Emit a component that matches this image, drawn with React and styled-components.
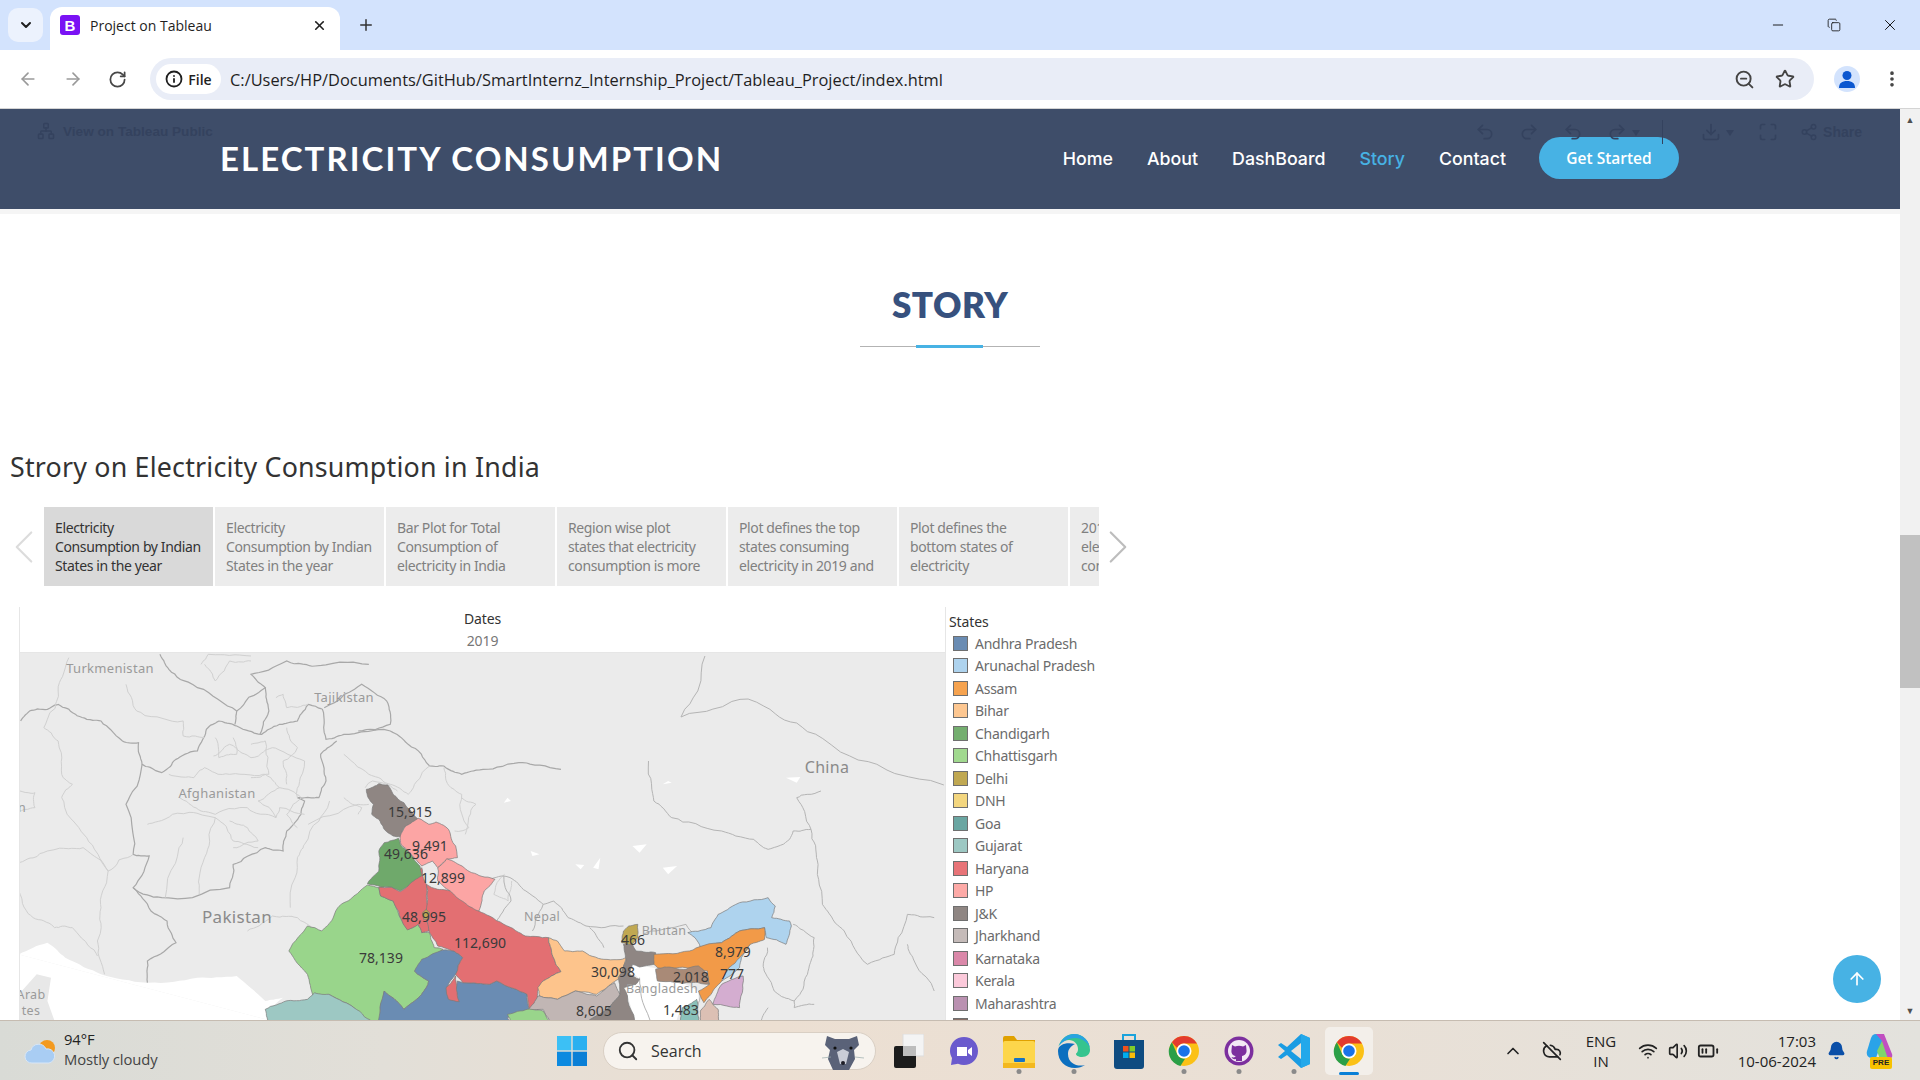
import React from 'react';
import styled, { createGlobalStyle } from 'styled-components';
import {
  ArrowLeft, ArrowRight, RotateCw, Info, ZoomOut, Star, MoreVertical, ChevronDown, ChevronLeft, ChevronRight,
  ChevronUp, X, Plus, Minus, Search, Bell, Wifi, Volume2, CloudOff, BatteryMedium, ArrowUp, Share2, Undo2, Redo2,
  Copy, Download, Maximize, Network,
} from 'lucide-react';

const GlobalStyle = createGlobalStyle`
  html, body { margin: 0; padding: 0; width: 1920px; height: 1080px; overflow: hidden; background: #fff; }
  * { box-sizing: border-box; }
  body { font-family: 'Open Sans', sans-serif; }
`;

const Screen = styled.div`
  width: 1920px;
  height: 1080px;
  display: grid;
  grid-template-rows: 50px 59px 1fr 60px;
  overflow: hidden;
  position: relative;
`;

/* browser chrome */
const TabStrip = styled.div`
  background: #d3e3fd;
  display: flex;
  align-items: flex-end;
  padding-left: 8px;
`;
const TabSearch = styled.div`
  width: 35px;
  height: 34px;
  margin-bottom: 8px;
  border-radius: 10px;
  background: #ecf2fd;
  display: flex;
  align-items: center;
  justify-content: center;
  color: #1f1f1f;
`;
const ActiveTab = styled.div`
  width: 290px;
  height: 43px;
  margin-left: 7px;
  background: #fff;
  border-radius: 12px 12px 0 0;
  display: flex;
  align-items: center;
  padding: 0 13px 7px 10px;
  gap: 10px;
  font-size: 14px;
  color: #1f1f1f;
`;
const Favicon = styled.div`
  width: 20px;
  height: 20px;
  border-radius: 3px;
  background: #7a12f4;
  color: #fff;
  font: 700 15px 'Liberation Sans', sans-serif;
  display: flex;
  align-items: center;
  justify-content: center;
`;
const TabTitle = styled.span`
  flex: 1;
  white-space: nowrap;
`;
const NewTab = styled.div`
  width: 44px;
  height: 34px;
  margin: 0 0 8px 4px;
  display: flex;
  align-items: center;
  justify-content: center;
  color: #333;
`;
const WindowControls = styled.div`
  margin-left: auto;
  display: flex;
  height: 50px;
  align-items: center;
  color: #111;
  padding-right: 2px;
`;
const WindowButton = styled.div`
  width: 56px;
  display: flex;
  justify-content: center;
`;
const Toolbar = styled.div`
  background: #fff;
  border-bottom: 1px solid #d4d4d4;
  border-radius: 10px 10px 0 0;
  display: flex;
  align-items: center;
  padding: 0 0 0 5px;
`;
const NavIcon = styled.div`
  width: 45px;
  display: flex;
  justify-content: center;
  color: ${p => (p.$muted ? '#9a9a9a' : '#474747')};
`;
const Omnibox = styled.div`
  margin-left: 10px;
  width: 1664px;
  height: 42px;
  border-radius: 21px;
  background: #e9edf7;
  display: flex;
  align-items: center;
  padding: 0 19px 0 6px;
  color: #1f1f1f;
`;
const FileChip = styled.div`
  width: 65px;
  height: 30px;
  border-radius: 15px;
  background: #fff;
  display: flex;
  align-items: center;
  justify-content: center;
  gap: 5px;
  font-size: 14px;
  font-weight: 600;
`;
const Url = styled.div`
  margin-left: 9px;
  font-size: 16.4px;
  white-space: nowrap;
  flex: 1;
`;
const OmniIcons = styled.div`
  display: flex;
  gap: 20px;
  color: #444;
`;
const Avatar = styled.div`
  margin-left: 20px;
  width: 26px;
  height: 26px;
  border-radius: 50%;
  background: #d3e3fd;
  overflow: hidden;
  display: flex;
  justify-content: center;
`;
const Kebab = styled.div`
  margin-left: 22px;
  color: #444;
  display: flex;
`;

/* page */
const Viewport = styled.div`
  display: grid;
  grid-template-columns: 1fr 20px;
  min-height: 0;
  overflow: hidden;
`;
const Page = styled.main`
  min-width: 0;
  overflow: hidden;
  display: flex;
  flex-direction: column;
  background: #fff;
`;
const Header = styled.header`
  position: relative;
  flex: none;
  height: 100px;
  background: #3e4d69;
  display: flex;
  align-items: center;
  padding: 0 221px 2px 220px;
`;
const Brand = styled.h1`
  margin: 0;
  color: #fff;
  font: 700 33px 'Lato', sans-serif;
  letter-spacing: 2.05px;
  white-space: nowrap;
`;
const Menu = styled.nav`
  margin-left: auto;
  display: flex;
  align-items: center;
  gap: 34px;
`;
const MenuLink = styled.a`
  font: 500 17.8px 'Inter', sans-serif;
  color: ${p => (p.$active ? '#47b2e4' : '#fff')};
`;
const CtaButton = styled.a`
  width: 140px;
  height: 42px;
  margin-left: -1px;
  border-radius: 21px;
  background: #47b2e4;
  color: #fff;
  font: 600 15.5px 'Open Sans', sans-serif;
  display: flex;
  align-items: center;
  justify-content: center;
`;
const GhostLeft = styled.div`
  position: absolute;
  left: 37px;
  top: 13px;
  display: flex;
  align-items: center;
  gap: 8px;
  color: #34425e;
  font: 700 13.6px 'Liberation Sans', sans-serif;
`;
const GhostRight = styled.div`
  position: absolute;
  right: 38px;
  top: 11px;
  display: flex;
  align-items: center;
  color: #34425e;
  font: 700 14px 'Liberation Sans', sans-serif;
`;
const GhostTool = styled.span`
  display: flex;
  align-items: center;
  gap: 5px;
  margin-right: ${p => p.$gap ?? 24}px;
`;
const GhostDivider = styled.span`
  width: 1px;
  height: 24px;
  background: #34425e;
  margin-right: 38px;
`;
const GhostCaret = styled.span`
  width: 0;
  height: 0;
  border: 4px solid transparent;
  border-top: 6px solid #34425e;
  margin-top: 5px;
`;
const Strip = styled.div`
  flex: none;
  height: 5px;
  background: #f5f5f5;
`;
const SectionTitle = styled.div`
  flex: none;
  padding-top: 68px;
  display: flex;
  flex-direction: column;
  align-items: center;
`;
const SectionHeading = styled.h2`
  margin: 0;
  font: 800 35px/44px 'Lato', sans-serif;
  color: #37517e;
  letter-spacing: .5px;
`;
const SectionRule = styled.div`
  margin-top: 20px;
  width: 180px;
  height: 1px;
  background: #b3b3b3;
  position: relative;
  &::after {
    content: '';
    position: absolute;
    left: 56px;
    top: -1px;
    width: 67px;
    height: 3px;
    background: #47b2e4;
  }
`;
const StoryTitle = styled.h3`
  margin: 102px 0 0 10px;
  flex: none;
  font: 400 26.8px/36px 'Noto Sans', sans-serif;
  color: #333;
  letter-spacing: .2px;
`;
const Navigator = styled.div`
  flex: none;
  margin-top: 22px;
  display: flex;
  align-items: center;
  height: 79px;
`;
const Pager = styled.div`
  flex: none;
  width: 44px;
  display: flex;
  justify-content: center;
  padding: ${p => (p.$faded ? '0 0 0 4px' : '0 6px 0 0')};
  color: ${p => (p.$faded ? '#dcdcdc' : '#bdbdbd')};
  svg { flex: none; }
`;
const StoryPoints = styled.div`
  width: 1055px;
  height: 79px;
  display: flex;
  gap: 2px;
  overflow: hidden;
`;
const StoryPoint = styled.div`
  flex: none;
  width: 169px;
  padding: 11px 6px 0 11px;
  background: ${p => (p.$active ? '#d9d9d9' : '#ececec')};
  color: ${p => (p.$active ? '#333' : '#808080')};
  font: 400 14px/19px 'Noto Sans', sans-serif;
  letter-spacing: -.38px;
  white-space: pre-line;
`;
const Viz = styled.section`
  flex: 1;
  min-height: 0;
  margin: 21px 0 0 19px;
  width: 1080px;
  display: flex;
  border-left: 1px solid #e6e6e6;
  overflow: hidden;
`;
const MapColumn = styled.div`
  width: 925px;
  flex: none;
  display: flex;
  flex-direction: column;
`;
const MapHeader = styled.div`
  height: 46px;
  flex: none;
  text-align: center;
  border-bottom: 1px solid #e6e6e6;
  padding-top: 2px;
`;
const HeaderTitle = styled.div`
  font: 400 14px/20px 'Noto Sans', sans-serif;
  color: #333;
  letter-spacing: -.1px;
`;
const HeaderValue = styled.div`
  font: 400 14px/20px 'Noto Sans', sans-serif;
  color: #777;
  margin-top: 2px;
  letter-spacing: -.1px;
`;
const MapArea = styled.div`
  flex: 1;
  min-height: 0;
  background: #ebebeb;
  display: flex;
`;
const CountryLabel = styled.text`
  font-family: 'Noto Sans', sans-serif;
  font-size: ${p => p.$size || 13}px;
  letter-spacing: .3px;
  fill: ${p => p.$color || '#9a9a9a'};
  text-anchor: middle;
  dominant-baseline: middle;
`;
const ValueLabel = styled.text`
  font-family: 'Noto Sans', sans-serif;
  font-size: 14px;
  fill: #3a3a3a;
  text-anchor: middle;
  dominant-baseline: middle;
`;
const Legend = styled.aside`
  flex: none;
  width: 154px;
  border-left: 1px solid #e6e6e6;
  padding: 5px 0 0 3px;
`;
const LegendTitle = styled.div`
  font: 400 14px/20px 'Noto Sans', sans-serif;
  color: #333;
  letter-spacing: -.1px;
`;
const LegendRow = styled.div`
  height: 22.5px;
  display: flex;
  align-items: center;
  gap: 7px;
  padding-left: 4px;
  font: 400 14px 'Noto Sans', sans-serif;
  color: #6b6b6b;
  letter-spacing: -.25px;
  white-space: nowrap;
`;
const Swatch = styled.span`
  width: 15px;
  height: 15px;
  flex: none;
  border: 1px solid #6f6f6f;
  background: ${p => p.$color};
`;
const ToTop = styled.a`
  position: absolute;
  left: 1833px;
  top: 955px;
  width: 48px;
  height: 48px;
  border-radius: 50%;
  background: #47b2e4;
  color: #fff;
  display: flex;
  align-items: center;
  justify-content: center;
`;
const Scrollbar = styled.div`
  background: #f1f1f1;
  display: flex;
  flex-direction: column;
  align-items: center;
  color: #505050;
  font-size: 9px;
`;
const ScrollArrow = styled.div`
  height: 20px;
  flex: none;
  display: flex;
  align-items: center;
`;
const ScrollTrack = styled.div`
  flex: 1;
  width: 100%;
  padding-top: 406px;
`;
const ScrollThumb = styled.div`
  height: 153px;
  background: #c1c1c1;
`;

/* taskbar */
const Taskbar = styled.footer`
  background: linear-gradient(90deg, #d9dbd6 0%, #e2dfd8 20%, #ecdfd2 40%, #e9e0d6 70%, #e3e2dd 100%);
  border-top: 1px solid #c6bcb1;
  display: flex;
  align-items: center;
  position: relative;
`;
const Weather = styled.div`
  width: 544px;
  flex: none;
  padding-left: 24px;
  display: flex;
  align-items: center;
  gap: 8px;
`;
const WeatherText = styled.div`
  font-size: 14.8px;
  line-height: 20px;
  color: #222;
  white-space: nowrap;
  letter-spacing: -.1px;
  margin-top: -3px;
`;
const WeatherSub = styled.div`
  color: #444;
`;
const TaskSlot = styled.div`
  width: ${p => (p.$active ? 48 : 55)}px;
  margin: 0 ${p => (p.$active ? 3.5 : 0)}px;
  height: 48px;
  flex: none;
  display: flex;
  align-items: center;
  justify-content: center;
  position: relative;
  border-radius: 5px;
  background: ${p => (p.$active ? '#f3efea' : 'transparent')};
  &::after {
    content: '';
    display: ${p => (p.$dot || p.$active ? 'block' : 'none')};
    position: absolute;
    bottom: ${p => (p.$active ? 0 : 1)}px;
    left: 50%;
    transform: translateX(-50%);
    width: ${p => (p.$active ? 20 : 5)}px;
    height: ${p => (p.$active ? 3 : 5)}px;
    border-radius: 3px;
    background: ${p => (p.$active ? '#0a7fd6' : '#8a8a8a')};
  }
`;
const SearchBox = styled.div`
  width: 273px;
  height: 38px;
  margin: 0 5px 0 4px;
  flex: none;
  border-radius: 19px;
  background: #f7f3ee;
  border: 1px solid #d9cfc4;
  display: flex;
  align-items: center;
  padding: 0 8px 0 13px;
  gap: 12px;
  color: #333;
  font-size: 16px;
`;
const SearchLabel = styled.span`
  flex: 1;
`;
const Tray = styled.div`
  margin-left: auto;
  display: flex;
  align-items: center;
  color: #222;
  padding-right: 24px;
`;
const TrayIcon = styled.div`
  width: ${p => p.$w || 30}px;
  display: flex;
  justify-content: center;
`;
const Lang = styled.div`
  width: 50px;
  margin: 0 7px 0 0;
  text-align: center;
  font-size: 15px;
  line-height: 20px;
`;
const Clock = styled.div`
  width: 90px;
  margin-left: 3px;
  text-align: right;
  font-size: 15px;
  line-height: 20px;
  white-space: nowrap;
`;

const points = [
  'Electricity\nConsumption by Indian\nStates in the year',
  'Electricity\nConsumption by Indian\nStates in the year',
  'Bar Plot for Total\nConsumption of\nelectricity in India',
  'Region wise plot\nstates that electricity\nconsumption is more',
  'Plot defines the top\nstates consuming\nelectricity in 2019 and',
  'Plot defines the\nbottom states of\nelectricity',
  '2019\nelectricity\nconsumption',
];

const legend = [
  ['Andhra Pradesh', '#6a8cb3'], ['Arunachal Pradesh', '#aed3ee'], ['Assam', '#f6a34f'], ['Bihar', '#fdc791'],
  ['Chandigarh', '#74ae6f'], ['Chhattisgarh', '#a1d98f'], ['Delhi', '#c0a852'], ['DNH', '#f3d67f'],
  ['Goa', '#6aa6a2'], ['Gujarat', '#9dc8c3'], ['Haryana', '#e87478'], ['HP', '#fdaaa7'], ['J&K', '#8f8683'],
  ['Jharkhand', '#c5bbb9'], ['Karnataka', '#da88a9'], ['Kerala', '#fbc9da'], ['Maharashtra', '#ba91b1'],
  ['Manipur', '#8a6f66'],
];

// midpoint displacement keyed on the midpoint, so shared state borders still line up
const noise = (x, y, k) => {
  const v = Math.sin(x * 12.9898 + y * 78.233 + k) * 43758.5453;
  return v - Math.floor(v) - 0.5;
};
const wiggle = (str, amp = 0.16, depth = 3) => {
  let pts = str.trim().split(/\s+/).map(s => s.split(',').map(Number));
  for (let d = 0; d < depth; d++) {
    const next = [];
    pts.forEach((p, i) => {
      next.push(p);
      const q = pts[i + 1];
      if (!q) return;
      const len = Math.hypot(q[0] - p[0], q[1] - p[1]);
      if (len < 10) return;
      const mx = (p[0] + q[0]) / 2;
      const my = (p[1] + q[1]) / 2;
      next.push([mx + noise(mx, my, 1) * len * amp, my + noise(mx, my, 2) * len * amp]);
    });
    pts = next;
  }
  return pts.map(p => p.map(n => n.toFixed(1)).join(',')).join(' ');
};
const closed = str => {
  const first = str.trim().split(/\s+/)[0];
  return wiggle(`${str} ${first}`, 0.13, 3);
};

// state shapes, traced in zoom coordinates (x*2.8, y*3 from the map origin)
const states = [
  ['#99d58b', '298,372 330,380 335,405 370,420 395,480 410,505 440,490 450,515 472,515 485,560 510,565 430,630 470,660 450,700 430,720 400,745 380,720 345,690 335,790 300,790 260,740 190,700 150,712 130,640 78,570 130,495 170,510 215,440 250,415'],
  ['#6a8cb3', '510,567 540,570 565,590 545,640 520,680 525,715 550,720 550,660 565,665 640,670 660,660 745,700 750,745 690,770 700,790 330,790 345,690 380,720 400,745 430,720 450,700 470,660 430,630 450,595'],
  ['#e36f72', '545,645 555,722 525,715 518,680'],
  ['#9dc8c3', '12,745 70,720 130,715 150,695 190,700 260,740 320,790 20,790'],
  ['#e36f72', '463,370 495,385 530,390 610,450 680,490 740,525 805,530 815,580 840,632 790,660 775,690 775,745 750,740 745,700 660,660 640,670 565,665 545,640 565,590 540,570 495,555 470,510 462,440'],
  ['#e36f72', '330,378 365,378 390,392 450,320 463,370 462,460 470,510 450,515 440,490 410,507 395,480 385,450 370,420 335,405'],
  ['#c0a852', '452,455 462,445 472,455 470,475 455,475'],
  ['#6fa96b', '345,245 385,232 390,250 420,280 445,315 450,345 420,365 390,390 365,378 335,378 298,368 330,330 330,270'],
  ['#8f8683', '295,85 330,68 355,72 370,100 400,125 420,150 440,175 400,200 392,228 370,225 345,205 330,175 310,160 315,130 300,110'],
  ['#fca5a4', '440,172 470,190 490,183 525,205 545,255 550,290 520,295 495,320 480,300 450,315 420,280 392,250 390,225 405,195'],
  ['#fca5a4', '495,320 520,293 545,305 590,335 655,355 625,390 610,450 570,425 530,390 495,360'],
  ['#fdc48c', '805,530 830,540 850,570 900,570 960,595 1025,590 1005,650 985,665 940,700 880,690 830,715 780,705 775,680 790,660 840,632 815,580'],
  ['#c1b6b4', '780,705 830,715 880,690 940,705 990,665 1005,700 975,740 905,790 815,790 790,745 750,745 775,705'],
  ['#99d58b', '690,760 745,745 790,750 812,790 700,790'],
  ['#8f8683', '1015,550 1040,550 1050,570 1105,575 1100,610 1060,618 1040,610 1030,640 1060,655 1050,670 1015,680 1050,790 905,790 975,740 1005,700 1000,650 1022,600'],
  ['#c0a852', '1015,510 1030,495 1055,490 1055,530 1040,550 1010,545'],
  ['#aed3ee', '1195,515 1260,500 1280,460 1340,425 1420,410 1440,435 1430,470 1480,480 1485,495 1470,550 1415,530 1410,500 1340,510 1290,545 1230,560 1215,530'],
  ['#aed3ee', '1370,550 1345,590 1340,620 1290,660 1285,640 1320,600 1340,565'],
  ['#f29a48', '1100,580 1200,570 1290,545 1340,510 1410,500 1410,535 1370,550 1340,590 1310,620 1290,660 1260,700 1240,725 1225,690 1255,670 1250,630 1190,620 1110,620 1100,610'],
  ['#a98a77', '1105,625 1130,618 1190,625 1225,615 1250,640 1255,670 1200,665 1110,660'],
  ['#d4add0', '1290,670 1350,645 1340,740 1265,730'],
  ['#8ac1ba', '1170,790 1180,740 1220,715 1225,790'],
  ['#dcc0b4', '1230,750 1255,715 1280,745 1285,790 1230,790'],
];

// borders of the neighbours, traced from the left part of the map
const heavyLines = [
  '55,240 80,210 130,205 160,190 190,205 240,235 280,240 340,300 385,305 395,370 450,395 490,355 550,330 575,265 610,240 660,255 730,280 780,250 830,240 860,190 900,205 910,295 960,280 1090,270 1140,310 1200,375 1240,375 1290,400 1350,385 1460,365 1568,385',
  '395,370 350,490 370,640 415,645 370,740 450,770 640,740 650,670 740,620 790,630 800,570 840,520 850,480 830,470 890,470 910,420 895,340 940,300',
  '370,740 420,810 465,840 490,905 410,960 410,1025',
  '445,40 470,85 550,140 660,210 655,250',
  '660,210 740,140 700,100 800,60 880,75 1030,70',
  '740,140 750,210 725,280',
  '905,200 1010,130 1080,180 1090,250 1000,270',
];
const lightLines = [
  '190,50 160,150 120,260 160,300 170,400 200,430 170,470 240,590 300,690 280,800 270,900 290,1000',
  '350,130 380,210 510,240 510,285 570,290',
  '50,665 130,630 230,620 300,690 370,640',
  '595,345 640,310 700,350 760,320 850,360 830,470',
  '470,400 540,410 570,380 640,400 740,400 780,440 720,480 770,530 780,500 850,520',
  '500,470 560,510 600,520 690,500 770,530',
  '410,550 480,520 600,530 570,650 555,760',
  '510,590 460,770',
  '600,530 650,600 720,620',
  '860,550 1000,490 1030,490',
  '810,800 830,650 850,610 920,480',
  '690,870 760,825 830,830 910,880',
  '50,750 90,830 150,860 200,860 270,945',
  '960,340 1030,400 1090,430 1140,460 1200,375',
  '1240,380 1260,440 1290,460 1310,560 1270,570',
  '570,70 600,120 640,60 700,60',
  '600,290 610,350 660,340 650,290',
  '700,310 740,300 750,400 700,410',
  '800,260 830,320 790,360 800,430',
  '780,440 840,470 800,520 830,560',
  '640,540 690,560 720,600 650,620',
  '560,70 580,40 700,45',
  '770,170 790,160 800,200 860,190',
  '50,450 95,455 95,500 50,510',
  '1020,440 1040,420 1110,450',
  '960,470 1010,500 1000,520',
  '1290,470 1330,490 1300,580',
  '1410,700 1380,760 1420,780 1430,720',
];
const easternLines = [
  '620,360 680,345 730,380 790,430 820,420 860,470 910,495 1015,495',
  '1085,0 1100,120 1150,170 1290,210 1380,235 1420,265 1480,235 1490,210 1540,205 1500,110 1568,90',
  '1490,490 1549,530 1540,600 1530,640 1493,720 1493,740 1549,730',
  '1418,560 1409,630 1437,690 1493,720',
  '1540,205 1558,300 1572,430 1586,450 1633,510 1698,610 1773,580 1810,460 1885,470',
  '1810,550 1829,600 1885,690',
  '1243,-315 1176,-132 1364,-186 1500,-114 1672,-3 1912,72',
  '680,345 700,420 660,480',
  '790,430 760,510',
  '920,500 960,560',
  '1070,520 1190,490 1230,540',
  '1060,650 1090,780',
  '1230,700 1200,780',
  '1420,740 1400,780',
];
const whiteSpots = [
  '690,110 700,120 680,125', '1040,255 1080,250 1060,275', '880,310 905,312 895,325', '1125,320 1165,315 1140,340',
  '930,320 950,290 945,325', '755,270 780,280 760,285', '1470,50 1510,48 1500,65', '1140,60 1150,65 1125,70',
];

const mapValues = [
  ['15,915', 409, 812], ['9,491', 429, 846], ['49,636', 405, 854], ['12,899', 442, 878], ['48,995', 423, 917],
  ['112,690', 479, 943], ['78,139', 380, 958], ['466', 632, 940], ['8,979', 732, 952], ['30,098', 612, 972],
  ['2,018', 690, 977], ['777', 731, 974], ['8,605', 593, 1011], ['1,483', 680, 1010],
];

const IndiaMap = () => (
  <svg width="925" height="368" viewBox="19 652 925 368">
    <g transform="translate(0 640) scale(.35714 .33333)">
      {/* sea and gulf */}
      <polygon fill="#fff" points={wiggle('50,940 130,905 180,950 280,1000 410,1025 550,1010 660,1005 740,1080 790,1070 740,1110 760,1140', 0.08)} />
      <polygon fill="#fff" points="50,1140 50,940 760,1140" />
      <polygon fill="#e8e8e8" points="50,1140 50,1060 100,1000 140,1010 130,1080 150,1140" />
      {heavyLines.map(p => <polyline key={p} points={wiggle(p)} fill="none" stroke="#a8a8a8" strokeWidth="1.2" vectorEffect="non-scaling-stroke" />)}
      {lightLines.map(p => <polyline key={p} points={wiggle(p, 0.2)} fill="none" stroke="#d0d0d0" strokeWidth="1" vectorEffect="non-scaling-stroke" />)}
    </g>
    <g transform="translate(260 760) scale(.35714 .33333)">
      <polygon fill="#fff" points="1020,610 1100,620 1225,690 1225,720 1175,740 1160,790 1050,790 1020,680 1060,655" />
      {whiteSpots.map(p => <polygon key={p} points={p} fill="#fff" />)}
      {easternLines.map(p => <polyline key={p} points={wiggle(p)} fill="none" stroke="#b4b4b4" strokeWidth="1" vectorEffect="non-scaling-stroke" />)}
      {states.map(([fill, p]) => (
        <polygon key={p} points={closed(p)} fill={fill} stroke="#7b7b7b" strokeOpacity=".7" strokeWidth="1" vectorEffect="non-scaling-stroke" />
      ))}
    </g>
    <CountryLabel x="109" y="669">Turkmenistan</CountryLabel>
    <CountryLabel x="343" y="698">Tajikistan</CountryLabel>
    <CountryLabel x="216" y="794">Afghanistan</CountryLabel>
    <CountryLabel x="236" y="917" $size={17} $color="#8a8a8a">Pakistan</CountryLabel>
    <CountryLabel x="826" y="768" $size={16} $color="#8a8a8a">China</CountryLabel>
    <CountryLabel x="541" y="917" $size={12.5}>Nepal</CountryLabel>
    <CountryLabel x="663" y="931" $size={12.5}>Bhutan</CountryLabel>
    <CountryLabel x="661" y="989" $size={12.5}>Bangladesh</CountryLabel>
    <CountryLabel x="30" y="995" $size={12.5}>Arab</CountryLabel>
    <CountryLabel x="30" y="1011" $size={12.5}>tes</CountryLabel>
    <CountryLabel x="21" y="808" $size={12.5}>n</CountryLabel>
    {mapValues.map(([t, x, y]) => <ValueLabel key={t} x={x} y={y}>{t}</ValueLabel>)}
  </svg>
);

const ChromeLogo = ({ size = 32 }) => (
  <svg width={size} height={size} viewBox="0 0 32 32">
    <circle cx="16" cy="16" r="15" fill="#fbc116" />
    <path d="M16 1a15 15 0 0 1 13 7.5H16a7.5 7.5 0 0 0-6.9 4.5L3.9 7.2A15 15 0 0 1 16 1z" fill="#e33b2e" />
    <path d="M3.9 7.2 9.6 20a7.5 7.5 0 0 0 7.6 3.4L12.4 31A15 15 0 0 1 3.9 7.2z" fill="#2b9f47" />
    <circle cx="16" cy="16" r="7.5" fill="#fff" />
    <circle cx="16" cy="16" r="5.8" fill="#1a73e8" />
  </svg>
);

const WeatherIcon = () => (
  <svg width="32" height="26" viewBox="0 0 32 26">
    <circle cx="23" cy="10" r="8" fill="#f39a1f" />
    <path d="M8 25a6.5 6.5 0 0 1-1-13 8 8 0 0 1 15-1 7 7 0 0 1 3 14z" fill="#a9cdf3" stroke="#d7e6f7" />
  </svg>
);

const WindowsLogo = () => (
  <svg width="30" height="30" viewBox="0 0 30 30">
    <rect x="0" y="0" width="14.3" height="14.3" fill="#3cc0f5" />
    <rect x="15.7" y="0" width="14.3" height="14.3" fill="#2ab0f0" />
    <rect x="0" y="15.7" width="14.3" height="14.3" fill="#0c8ae0" />
    <rect x="15.7" y="15.7" width="14.3" height="14.3" fill="#0a7fd6" />
  </svg>
);

const Mascot = () => (
  <svg width="48" height="38" viewBox="0 0 48 38">
    <path d="M8 4l8 3h14l8-3 2 9-5 5 1 9-6 11H14L9 27l2-9-5-5z" fill="#5a6278" />
    <path d="M18 20l6-3 6 3-3 12h-6z" fill="#c9ccd6" />
    <circle cx="24" cy="31" r="2" fill="#1d1d26" />
    <circle cx="16" cy="16" r="1.6" fill="#111" />
    <circle cx="32" cy="16" r="1.6" fill="#111" />
    <path d="M3 26l9-1M45 26l-9-1" stroke="#9aa" strokeWidth=".7" />
  </svg>
);

const TaskView = () => (
  <svg width="30" height="34" viewBox="0 0 30 34">
    <rect x="9" y="0" width="21" height="22" fill="#f4f4f4" stroke="#ddd" />
    <rect x="0" y="12" width="22" height="22" rx="2" fill="#1c1c1c" />
    <rect x="9" y="12" width="13" height="10" fill="#bdbdbd" />
  </svg>
);

const TeamsIcon = () => (
  <svg width="30" height="30" viewBox="0 0 30 30">
    <path d="M15 1c8 0 14 6 14 14s-6 14-14 14c-2 0-4-.4-6-1.300L2 29l1-7C1.700 19.500 1 17.300 1 15 1 7 7 1 15 1z" fill="#6a5acd" />
    <path d="M8 11h10v9H8zM19 14l4-3v9l-4-3z" fill="#fff" />
  </svg>
);

const FolderIcon = () => (
  <svg width="32" height="34" viewBox="0 0 32 34">
    <path d="M0 4a2 2 0 0 1 2-2h9l3 4h18v6H0z" fill="#e0a100" />
    <rect x="0" y="7" width="32" height="27" rx="2" fill="#fdd64b" />
    <rect x="11" y="24" width="11" height="4" rx="1" fill="#1673c4" />
    <rect x="0" y="29" width="32" height="5" fill="#f3b81f" />
  </svg>
);

const EdgeIcon = () => (
  <svg width="32" height="34" viewBox="0 0 32 34">
    <path d="M16 0c9 0 16 7 16 16 0 4-3 7-8 7-4 0-6-2-6-3 0-1 2-1 2-5 0-5-4-9-9-9-6 0-10 4-11 8C2 6 8 0 16 0z" fill="#36c48e" />
    <path d="M0 17c0 10 7 17 17 17 4 0 7-1 10-3-7 2-17-1-17-11 0-5 3-8 7-10-8-2-17 0-17 7z" fill="#0c6fbf" />
    <path d="M16 0c9 0 16 7 16 16 0-6-7-12-15-12C10 4 4 8 1 12 3 5 9 0 16 0z" fill="#2aa3e0" />
  </svg>
);

const StoreIcon = () => (
  <svg width="30" height="38" viewBox="0 0 30 38">
    <path d="M9 8V3h12v5" fill="none" stroke="#1aa3dc" strokeWidth="2" />
    <path d="M0 8h30v26a3 3 0 0 1-3 3H3a3 3 0 0 1-3-3z" fill="#0f4c81" />
    <rect x="9" y="14" width="5.500" height="5.500" fill="#f1511b" />
    <rect x="15.500" y="14" width="5.500" height="5.500" fill="#80cc28" />
    <rect x="9" y="20.500" width="5.500" height="5.500" fill="#00adef" />
    <rect x="15.500" y="20.500" width="5.500" height="5.500" fill="#fbbc09" />
  </svg>
);

const GithubIcon = () => (
  <svg width="30" height="30" viewBox="0 0 30 30">
    <circle cx="15" cy="15" r="14.500" fill="#7c2f9e" />
    <circle cx="15" cy="15" r="11" fill="#f3e9f5" />
    <path d="M8 9l3 1.500a12 12 0 0 1 8 0L22 9l.5 5c.5 3-1.500 5.500-4.500 6v5h-6v-2c-2 .5-3.500 0-4.500-2 1.500.5 2.500 1 4-.5v-.5c-3-.5-4.500-3-4-6z" fill="#7c2f9e" />
  </svg>
);

const VsCodeIcon = () => (
  <svg width="32" height="34" viewBox="0 0 32 34">
    <path d="M23 0l9 4v26l-9 4-14-13-6 4-3-2 7-6-7-6 3-2 6 4z" fill="#1a9ce3" />
    <path d="M23 9L13 17l10 8z" fill="#eae2d8" />
    <path d="M23 0l9 4v26l-9 4z" fill="#23a8ea" />
  </svg>
);

const CopilotIcon = () => (
  <svg width="30" height="36" viewBox="0 0 30 36">
    <path d="M10 1h8l8 20c1 3-1 5-4 5h-6L10 8z" fill="#c04fc0" />
    <path d="M10 1C7 1 6 3 5 5L1 18c-1 4 1 7 5 7h4l6-17z" fill="#2aa3e8" />
    <path d="M16 8l6 18h-8l-3-8z" fill="#7fd46b" />
    <rect x="4" y="24" width="22" height="12" rx="2" fill="#f7c200" />
  </svg>
);

const CopilotBadge = styled.span`
  position: absolute;
  left: 5px;
  bottom: 0;
  width: 20px;
  text-align: center;
  font: 800 8px/12px 'Liberation Sans', sans-serif;
  color: #222;
`;
const CopilotWrap = styled.div`
  position: relative;
  width: 30px;
  height: 36px;
  margin-left: 10px;
  display: flex;
`;

const App = () => (
  <Screen>
    <GlobalStyle />
    <TabStrip>
      <TabSearch><ChevronDown size={16} strokeWidth={3} /></TabSearch>
      <ActiveTab>
        <Favicon>B</Favicon>
        <TabTitle>Project on Tableau</TabTitle>
        <X size={15} strokeWidth={2.6} />
      </ActiveTab>
      <NewTab><Plus size={18} strokeWidth={2} /></NewTab>
      <WindowControls>
        <WindowButton><Minus size={16} strokeWidth={1.4} /></WindowButton>
        <WindowButton><Copy size={14} strokeWidth={1.4} /></WindowButton>
        <WindowButton><X size={18} strokeWidth={1.3} /></WindowButton>
      </WindowControls>
    </TabStrip>
    <Toolbar>
      <NavIcon $muted><ArrowLeft size={20} /></NavIcon>
      <NavIcon $muted><ArrowRight size={20} /></NavIcon>
      <NavIcon><RotateCw size={19} strokeWidth={2.2} /></NavIcon>
      <Omnibox>
        <FileChip><Info size={18} strokeWidth={2.4} />File</FileChip>
        <Url>C:/Users/HP/Documents/GitHub/SmartInternz_Internship_Project/Tableau_Project/index.html</Url>
        <OmniIcons>
          <ZoomOut size={21} strokeWidth={2.2} />
          <Star size={20} strokeWidth={2.2} />
        </OmniIcons>
      </Omnibox>
      <Avatar>
        <svg width="26" height="26" viewBox="0 0 26 26">
          <circle cx="13" cy="9.500" r="4.500" fill="#0b57d0" />
          <path d="M5 22c0-5 3-7 8-7s8 2 8 7z" fill="#0b57d0" />
        </svg>
      </Avatar>
      <Kebab><MoreVertical size={20} strokeWidth={2.4} /></Kebab>
    </Toolbar>
    <Viewport>
      <Page>
        <Header>
          <GhostLeft><Network size={18} />View on Tableau Public</GhostLeft>
          <GhostRight>
            <GhostTool><Undo2 size={20} /></GhostTool>
            <GhostTool><Redo2 size={20} /></GhostTool>
            <GhostTool><Undo2 size={20} /></GhostTool>
            <GhostTool $gap={22}><Redo2 size={20} /><GhostCaret /></GhostTool>
            <GhostDivider />
            <GhostTool $gap={24}><Download size={20} /><GhostCaret /></GhostTool>
            <GhostTool $gap={22}><Maximize size={20} /></GhostTool>
            <GhostTool $gap={0}><Share2 size={18} />Share</GhostTool>
          </GhostRight>
          <Brand>ELECTRICITY CONSUMPTION</Brand>
          <Menu>
            <MenuLink>Home</MenuLink>
            <MenuLink>About</MenuLink>
            <MenuLink>DashBoard</MenuLink>
            <MenuLink $active>Story</MenuLink>
            <MenuLink>Contact</MenuLink>
            <CtaButton>Get Started</CtaButton>
          </Menu>
        </Header>
        <Strip />
        <SectionTitle>
          <SectionHeading>STORY</SectionHeading>
          <SectionRule />
        </SectionTitle>
        <StoryTitle>Strory on Electricity Consumption in India</StoryTitle>
        <Navigator>
          <Pager $faded><ChevronLeft size={58} strokeWidth={0.9} /></Pager>
          <StoryPoints>
            {points.map((t, i) => <StoryPoint key={i} $active={i === 0}>{t}</StoryPoint>)}
          </StoryPoints>
          <Pager><ChevronRight size={58} strokeWidth={0.9} /></Pager>
        </Navigator>
        <Viz>
          <MapColumn>
            <MapHeader>
              <HeaderTitle>Dates</HeaderTitle>
              <HeaderValue>2019</HeaderValue>
            </MapHeader>
            <MapArea><IndiaMap /></MapArea>
          </MapColumn>
          <Legend>
            <LegendTitle>States</LegendTitle>
            {legend.map(([name, color]) => (
              <LegendRow key={name}><Swatch $color={color} />{name}</LegendRow>
            ))}
          </Legend>
        </Viz>
      </Page>
      <Scrollbar>
        <ScrollArrow>▲</ScrollArrow>
        <ScrollTrack><ScrollThumb /></ScrollTrack>
        <ScrollArrow>▼</ScrollArrow>
      </Scrollbar>
    </Viewport>
    <Taskbar>
      <Weather>
        <WeatherIcon />
        <WeatherText>94°F<WeatherSub>Mostly cloudy</WeatherSub></WeatherText>
      </Weather>
      <TaskSlot><WindowsLogo /></TaskSlot>
      <SearchBox><Search size={22} strokeWidth={2} /><SearchLabel>Search</SearchLabel><Mascot /></SearchBox>
      <TaskSlot><TaskView /></TaskSlot>
      <TaskSlot><TeamsIcon /></TaskSlot>
      <TaskSlot $dot><FolderIcon /></TaskSlot>
      <TaskSlot $dot><EdgeIcon /></TaskSlot>
      <TaskSlot><StoreIcon /></TaskSlot>
      <TaskSlot $dot><ChromeLogo /></TaskSlot>
      <TaskSlot $dot><GithubIcon /></TaskSlot>
      <TaskSlot $dot><VsCodeIcon /></TaskSlot>
      <TaskSlot $active><ChromeLogo /></TaskSlot>
      <Tray>
        <TrayIcon><ChevronUp size={20} /></TrayIcon>
        <TrayIcon $w={48}><CloudOff size={20} /></TrayIcon>
        <Lang>ENG<br />IN</Lang>
        <TrayIcon><Wifi size={20} /></TrayIcon>
        <TrayIcon><Volume2 size={20} /></TrayIcon>
        <TrayIcon><BatteryMedium size={22} /></TrayIcon>
        <Clock>17:03<br />10-06-2024</Clock>
        <TrayIcon $w={40}><Bell size={19} fill="#0b4fa8" color="#0b4fa8" /></TrayIcon>
        <CopilotWrap><CopilotIcon /><CopilotBadge>PRE</CopilotBadge></CopilotWrap>
      </Tray>
    </Taskbar>
    <ToTop><ArrowUp size={20} /></ToTop>
  </Screen>
);

export default App;
